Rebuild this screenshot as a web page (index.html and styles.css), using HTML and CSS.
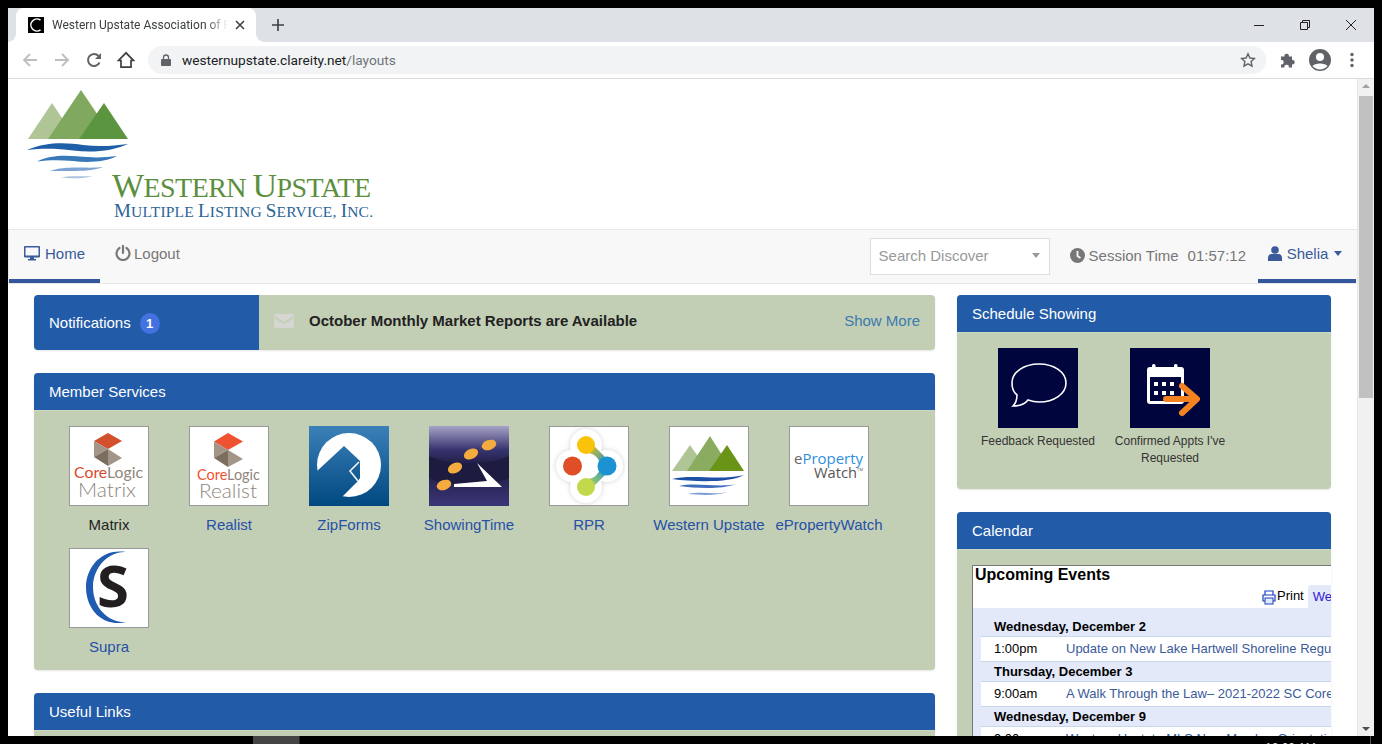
FILE: index.html
```html
<!DOCTYPE html>
<html lang="en">
<head>
<meta charset="utf-8">
<title>Western Upstate Association of REALTORS</title>
<link rel="stylesheet" href="styles.css">
</head>
<body>
<div class="window">
  <div class="tabstrip">
    <div class="tab">
      <span class="favicon"><svg width="16" height="16" viewBox="0 0 16 16"><rect width="16" height="16" fill="#000"/><path d="M12.500 3.200A6 6 0 1 0 12.500 12.800" fill="none" stroke="#fff" stroke-width="1.500"/></svg></span>
      <span class="tab-title">Western Upstate Association of REALTORS</span>
      <svg class="tab-x" width="10" height="10" viewBox="0 0 10 10"><path d="M1 1l8 8M9 1l-8 8" stroke="#3c4043" stroke-width="1.600"/></svg>
    </div>
    <svg class="newtab" width="12" height="12" viewBox="0 0 12 12"><path d="M6 0v12M0 6h12" stroke="#3c4043" stroke-width="1.600"/></svg>
    <div class="winctl">
      <svg width="12" height="12" viewBox="0 0 12 12"><path d="M1 6.500h10" stroke="#222" stroke-width="1"/></svg>
      <svg width="12" height="12" viewBox="0 0 12 12"><path d="M3.500 3V1.500H10.500V8.500H8.500M1.500 3.500H8.500V10.500H1.500Z" fill="none" stroke="#222" stroke-width="1"/></svg>
      <svg width="12" height="12" viewBox="0 0 12 12"><path d="M1 1l10 10M11 1L1 11" stroke="#222" stroke-width="1"/></svg>
    </div>
  </div>
  <div class="toolbar">
    <svg class="tb-back" width="16" height="16" viewBox="0 0 16 16"><path d="M15 8H2M8 2L2 8l6 6" fill="none" stroke="#bcbec2" stroke-width="1.800"/></svg>
    <svg class="tb-fwd" width="16" height="16" viewBox="0 0 16 16"><path d="M1 8h13M8 2l6 6-6 6" fill="none" stroke="#bcbec2" stroke-width="1.800"/></svg>
    <svg class="tb-reload" width="16" height="16" viewBox="0 0 16 16"><path d="M13.500 10.500A6 6 0 1 1 12.500 4" fill="none" stroke="#5f6368" stroke-width="2"/><path d="M15 1v6H9z" fill="#5f6368"/></svg>
    <svg class="tb-home" width="18" height="18" viewBox="0 0 18 18"><path d="M9 1.800L1.500 9.500H4v6.700h10V9.500h2.500z" fill="none" stroke="#3c4043" stroke-width="1.700" stroke-linejoin="miter"/></svg>
    <div class="omnibox">
      <svg width="10" height="12" viewBox="0 0 10 12"><path d="M1 5h8a1 1 0 0 1 1 1v5a1 1 0 0 1-1 1H1a1 1 0 0 1-1-1V6a1 1 0 0 1 1-1z" fill="#5f6368"/><path d="M2.500 5V3.500a2.500 2.500 0 0 1 5 0V5" fill="none" stroke="#5f6368" stroke-width="1.300"/></svg>
      <span class="url"><span class="url-host">westernupstate.clareity.net</span>/layouts</span>
      <svg class="star" width="16" height="16" viewBox="0 0 16 16"><path d="M8 1.800l1.900 4.200 4.500.5-3.300 3.100.9 4.500L8 11.800l-4 2.300.9-4.500L1.600 6.500l4.500-.5z" fill="none" stroke="#5f6368" stroke-width="1.400"/></svg>
    </div>
    <svg class="tb-ext" width="16" height="16" viewBox="0 0 16 16"><path d="M1 4.500h3.500a2.200 2.200 0 1 1 4.300 0H12V8a2.200 2.200 0 1 1 0 4.300V15.500H8.800a2.200 2.200 0 1 0-4.300 0H1v-3.200a2.200 2.200 0 1 0 0-4.300z" fill="#5f6368"/></svg>
    <svg class="tb-user" width="24" height="24" viewBox="0 0 24 24"><circle cx="12" cy="12" r="11" fill="#5f6368"/><circle cx="12" cy="9" r="4" fill="#fff"/><path d="M4.500 18c2-3.500 13-3.500 15 0a10 10 0 0 1-15 0z" fill="#fff"/></svg>
    <svg class="tb-menu" width="4" height="16" viewBox="0 0 4 16"><circle cx="2" cy="2.500" r="1.700" fill="#5f6368"/><circle cx="2" cy="8" r="1.700" fill="#5f6368"/><circle cx="2" cy="13.500" r="1.700" fill="#5f6368"/></svg>
  </div>
  <div class="viewport">
    <div class="page">
      <header class="brand">
        <svg class="brand-logo" width="380" height="150" viewBox="0 0 380 150">
          <polygon points="20,60 44,24 68,60" fill="#afc595"/>
          <polygon points="40,60 73,11 106,60" fill="#80a95f"/>
          <polygon points="71,60 96,24 120,60" fill="#5b953f"/>
          <path d="M19 71C40 62 60 64 75 66C90 68 105 67 120 65C105 72 85 74 65 71.500C50 69.500 35 69 19 71Z" fill="#1f5fa8"/>
          <path d="M29 82.500C45 74 65 77 80 78C90 79 100 78 109 77C98 83 80 84 65 82C52 81 40 81 29 82.500Z" fill="#3878b8"/>
          <path d="M42 92C58 86 80 90 95 88C82 93.500 62 91.500 42 92Z" fill="#7ca4d2"/>
          <path d="M53 98.500C62 96 76 98 85 97C76 100 62 99.500 53 98.500Z" fill="#a8c2e0"/>
          <text class="logo-title" x="104" y="118" textLength="259" lengthAdjust="spacing"><tspan class="logo-cap">W</tspan><tspan class="logo-sc">estern </tspan><tspan class="logo-cap">U</tspan><tspan class="logo-sc">pstate</tspan></text>
          <text class="logo-sub" x="106" y="138" textLength="259" lengthAdjust="spacing"><tspan class="logo-subcap">M</tspan><tspan class="logo-subsc">ultiple </tspan><tspan class="logo-subcap">L</tspan><tspan class="logo-subsc">isting </tspan><tspan class="logo-subcap">S</tspan><tspan class="logo-subsc">ervice, </tspan><tspan class="logo-subcap">I</tspan><tspan class="logo-subsc">nc.</tspan></text>
        </svg>
      </header>
      <nav class="navbar">
        <a class="nav-link is-active">
          <svg width="16" height="15" viewBox="0 0 16 15"><path d="M1 0h14a1 1 0 0 1 1 1v9.500a1 1 0 0 1-1 1H10v1.500h2V14.500H4V13h2v-1.500H1a1 1 0 0 1-1-1V1a1 1 0 0 1 1-1zm.5 1.500v8h13v-8z" fill="#3a5a9a"/></svg>
          <span>Home</span>
        </a>
        <a class="nav-link nav-logout">
          <svg width="16" height="16" viewBox="0 0 16 16"><path d="M8 1v7" stroke="#777" stroke-width="2.200" stroke-linecap="round"/><path d="M11.500 3a6.500 6.500 0 1 1-7 0" fill="none" stroke="#777" stroke-width="2.200" stroke-linecap="round"/></svg>
          <span>Logout</span>
        </a>
        <div class="nav-right">
          <div class="search"><span>Search Discover</span><i class="caret"></i></div>
          <div class="session">
            <svg width="15" height="15" viewBox="0 0 15 15"><circle cx="7.500" cy="7.500" r="7.500" fill="#777"/><path d="M7.500 3v5l3 2" fill="none" stroke="#f8f8f8" stroke-width="1.800"/></svg>
            <span>Session Time</span><span class="session-time">01:57:12</span>
          </div>
          <a class="nav-link nav-user is-active">
            <svg width="14" height="15" viewBox="0 0 14 15"><circle cx="7" cy="4" r="3.800" fill="#3a5a9a"/><path d="M0 15v-3.500C0 9 2 8 4 8h6c2 0 4 1 4 3.500V15z" fill="#3a5a9a"/></svg>
            <span>Shelia</span><i class="caret caret-blue"></i>
          </a>
        </div>
      </nav>
      <main class="content">
        <div class="col-left">
          <section class="notify">
            <div class="notify-head"><span>Notifications</span><b class="badge">1</b></div>
            <div class="notify-body">
              <svg width="20" height="14" viewBox="0 0 20 14"><path d="M1 0h18a1 1 0 0 1 1 1v1L10 8 0 2V1a1 1 0 0 1 1-1zM0 4l10 6 10-6v9a1 1 0 0 1-1 1H1a1 1 0 0 1-1-1z" fill="#d5d6d2"/></svg>
              <strong>October Monthly Market Reports are Available</strong>
              <a class="show-more">Show More</a>
            </div>
          </section>
          <section class="panel">
            <h2 class="panel-head">Member Services</h2>
            <div class="tiles">
              <a class="tile">
                <svg class="tile-img framed" viewBox="0 0 78 78">
                  <polygon points="38,6 52,14 38,22 24,14" fill="#d2502c"/><polygon points="24,14 38,22 24,30" fill="#a39587"/><polygon points="24,30 38,22 38,39" fill="#7c6e5f"/><polygon points="38,22 52,31 38,39" fill="#a39587"/>
                  <text class="svg-core" x="4" y="51" textLength="69" lengthAdjust="spacingAndGlyphs"><tspan fill="#d9492c">Core</tspan><tspan fill="#8f867d">Logic</tspan></text>
                  <text class="svg-prod" x="8" y="70" textLength="58" lengthAdjust="spacingAndGlyphs">Matrix</text>
                </svg>
                <span class="tile-label is-dark">Matrix</span>
              </a>
              <a class="tile">
                <svg class="tile-img framed" viewBox="0 0 78 78">
                  <polygon points="38,6 53,14.500 38,23 24,14.500" fill="#ee5230"/><polygon points="24,14.500 38,23 24,31" fill="#a39587"/><polygon points="24,31 38,23 38,40" fill="#7c6e5f"/><polygon points="38,23 53,32 38,40" fill="#a39587"/>
                  <text class="svg-core" x="7" y="53" textLength="63" lengthAdjust="spacingAndGlyphs"><tspan fill="#ee5230">Core</tspan><tspan fill="#8f867d">Logic</tspan></text>
                  <text class="svg-prod" x="9" y="71" textLength="58" lengthAdjust="spacingAndGlyphs">Realist</text>
                </svg>
                <span class="tile-label">Realist</span>
              </a>
              <a class="tile">
                <svg class="tile-img" viewBox="0 0 80 80">
                  <defs><linearGradient id="zf" gradientUnits="userSpaceOnUse" x1="0" y1="0" x2="0" y2="80"><stop offset="0" stop-color="#3c80b8"/><stop offset="1" stop-color="#004880"/></linearGradient></defs>
                  <rect width="80" height="80" fill="url(#zf)"/>
                  <circle cx="40" cy="39" r="32" fill="#fff"/>
                  <polygon points="7,46 35,20 51,35 51,52 49,55 33,71 20,80 0,80 0,46" fill="url(#zf)"/>
                  <path d="M50 36L41 45L49 55" fill="none" stroke="#fff" stroke-width="1.500"/>
                </svg>
                <span class="tile-label">ZipForms</span>
              </a>
              <a class="tile">
                <svg class="tile-img" viewBox="0 0 80 80">
                  <defs><linearGradient id="st" x1="0" y1="0" x2="0" y2="1"><stop offset="0" stop-color="#a5a3c6"/><stop offset=".3" stop-color="#37336f"/><stop offset=".5" stop-color="#1d1b40"/><stop offset="1" stop-color="#3b3578"/></linearGradient></defs>
                  <rect width="80" height="80" fill="url(#st)"/>
                  <path d="M0 30C20 40 60 40 80 30V52C60 62 20 62 0 52z" fill="#1d1b3f"/>
                  <ellipse cx="15" cy="59" rx="7.500" ry="5" fill="#f5ab3d" transform="rotate(-20 15 59)"/>
                  <ellipse cx="26" cy="42" rx="7.500" ry="5" fill="#f5ab3d" transform="rotate(-25 26 42)"/>
                  <ellipse cx="42" cy="28" rx="7.500" ry="5" fill="#f5ab3d" transform="rotate(-25 42 28)"/>
                  <ellipse cx="60" cy="19" rx="7.500" ry="5" fill="#f5ab3d" transform="rotate(-20 60 19)"/>
                  <polygon points="48,37 73,61 25,61 25,58 58,55" fill="#fff"/>
                </svg>
                <span class="tile-label">ShowingTime</span>
              </a>
              <a class="tile">
                <svg class="tile-img framed" viewBox="0 0 78 78">
                  <defs>
                    <filter id="blob" x="-20%" y="-20%" width="140%" height="140%"><feDropShadow dx="0" dy="0" stdDeviation="2.500" flood-color="#999" flood-opacity=".45"/></filter>
                    <linearGradient id="rp1" gradientUnits="userSpaceOnUse" x1="36" y1="18" x2="57" y2="39"><stop offset="0" stop-color="#f9c30a"/><stop offset="1" stop-color="#1c92d2"/></linearGradient>
                    <linearGradient id="rp2" gradientUnits="userSpaceOnUse" x1="36" y1="60" x2="57" y2="39"><stop offset="0" stop-color="#c2d94c"/><stop offset="1" stop-color="#1c92d2"/></linearGradient>
                  </defs>
                  <g fill="#fff" filter="url(#blob)"><circle cx="36" cy="18" r="16"/><circle cx="22" cy="39" r="16"/><circle cx="57" cy="39" r="16"/><circle cx="36" cy="60" r="16"/><rect x="24" y="24" width="28" height="30"/></g>
                  <path d="M36 18L57 39" stroke="url(#rp1)" stroke-width="10"/>
                  <path d="M36 60L57 39" stroke="url(#rp2)" stroke-width="10"/>
                  <circle cx="37" cy="39" r="13" fill="#fff"/>
                  <circle cx="36" cy="18" r="9" fill="#f9c30a"/><circle cx="22.500" cy="39" r="9.500" fill="#e04e28"/><circle cx="57" cy="39" r="9.500" fill="#1c92d2"/><circle cx="36" cy="60" r="9" fill="#c2d94c"/>
                </svg>
                <span class="tile-label">RPR</span>
              </a>
              <a class="tile">
                <svg class="tile-img framed" viewBox="0 0 78 78">
                  <polygon points="2,44 20,18 38,44" fill="#afc595"/><polygon points="17,44 40,9 62,44" fill="#8aac5f"/><polygon points="39,44 57,18 74,44" fill="#6a9418"/>
                  <path d="M2 52C22 47 50 54 74 48C60 56 25 55 2 52Z" fill="#1d4fa6"/>
                  <path d="M9 59C25 55 50 61 66 57C50 63 25 61 9 59Z" fill="#3f6cbc"/>
                  <path d="M18 67C32 64 46 68 57 65C46 69 30 68 18 67Z" fill="#7d9dd8"/>
                </svg>
                <span class="tile-label">Western Upstate</span>
              </a>
              <a class="tile">
                <svg class="tile-img framed" viewBox="0 0 78 78">
                  <text class="svg-eprop" x="4" y="37" textLength="69" lengthAdjust="spacingAndGlyphs"><tspan fill="#666">e</tspan><tspan fill="#2f8fdc">Property</tspan></text>
                  <text class="svg-watch" x="24" y="51" textLength="43" lengthAdjust="spacingAndGlyphs">Watch</text>
                  <text class="svg-tm" x="67" y="44" textLength="6">TM</text>
                </svg>
                <span class="tile-label">ePropertyWatch</span>
              </a>
              <a class="tile">
                <svg class="tile-img framed" viewBox="0 0 78 78">
                  <path d="M56 3C30 -1 16 20 16 38C16 60 32 79 58 73C40 75 23 60 23 38C23 19 38 2 56 3Z" fill="#1f5bb0"/>
                  <text class="svg-s" x="27" y="58">S</text>
                </svg>
                <span class="tile-label">Supra</span>
              </a>
            </div>
          </section>
          <section class="panel">
            <h2 class="panel-head">Useful Links</h2>
            <div class="panel-stub"></div>
          </section>
        </div>
        <div class="col-right">
          <section class="panel">
            <h2 class="panel-head">Schedule Showing</h2>
            <div class="shows">
              <a class="show">
                <svg class="show-img" viewBox="0 0 80 80"><rect width="80" height="80" fill="#00053e"/><path d="M41 16C56 16 68 24 68 35C68 46 56 54 41 54C36 54 33 53 30 52C27 56 21 58 15 58C18 55 19 52 19 47C15 44 14 40 14 35C14 24 26 16 41 16Z" fill="none" stroke="#fff" stroke-width="1.600"/></svg>
                <span class="show-label">Feedback Requested</span>
              </a>
              <a class="show">
                <svg class="show-img" viewBox="0 0 80 80"><rect width="80" height="80" fill="#00053e"/><rect x="17" y="19" width="37" height="37" rx="3" fill="#fff"/><rect x="22" y="16" width="3.500" height="6" rx="1.500" fill="#fff"/><rect x="44" y="16" width="3.500" height="6" rx="1.500" fill="#fff"/><rect x="20" y="29" width="31" height="24" fill="#00053e"/><g fill="#fff"><rect x="24" y="34" width="4" height="4"/><rect x="32" y="34" width="4" height="4"/><rect x="40" y="34" width="4" height="4"/><rect x="24" y="43" width="4" height="4"/><rect x="32" y="43" width="4" height="4"/><rect x="40" y="43" width="4" height="4"/></g><path d="M36 51H66M52 38L67 51L52 65" fill="none" stroke="#f58220" stroke-width="6" stroke-linecap="round" stroke-linejoin="round"/></svg>
                <span class="show-label">Confirmed Appts I've Requested</span>
              </a>
            </div>
          </section>
          <section class="panel">
            <h2 class="panel-head">Calendar</h2>
            <div class="cal-wrap">
              <div class="cal">
                <div class="cal-title">Upcoming Events</div>
                <div class="cal-tabs">
                  <svg width="14" height="15" viewBox="0 0 14 15"><path d="M3 5V1h8v4M3 11H1V5h12v6h-2" fill="none" stroke="#1a3fc0" stroke-width="1.200"/><rect x="3" y="8" width="8" height="6" fill="#e3e9f8" stroke="#1a3fc0" stroke-width="1"/></svg>
                  <span class="cal-print">Print</span>
                  <span class="cal-tab">Week</span>
                </div>
                <div class="cal-list">
                  <div class="cal-date">Wednesday, December 2</div>
                  <div class="cal-row"><span class="cal-time">1:00pm</span><a class="cal-event">Update on New Lake Hartwell Shoreline Regulations</a></div>
                  <div class="cal-date">Thursday, December 3</div>
                  <div class="cal-row"><span class="cal-time">9:00am</span><a class="cal-event">A Walk Through the Law– 2021-2022 SC Core Course</a></div>
                  <div class="cal-date">Wednesday, December 9</div>
                  <div class="cal-row"><span class="cal-time">9:00am</span><a class="cal-event">Western Upstate MLS New Member Orientation</a></div>
                </div>
              </div>
            </div>
          </section>
        </div>
      </main>
    </div>
    <div class="scrollbar">
      <i class="sb-up"></i>
      <div class="sb-track"><div class="sb-thumb"></div></div>
      <i class="sb-down"></i>
    </div>
  </div>
</div>
<div class="taskbar"><span class="task-item"></span><span class="task-clock">12:00 AM</span><span class="task-edge"></span></div>
</body>
</html>
```
FILE: styles.css
```css
* { box-sizing: border-box; }
html, body { height: 744px; overflow: hidden; }
body { margin: 0; background: #000; font-family: "Liberation Sans", Arial, sans-serif; font-size: 15px; color: #333; }
a { text-decoration: none; }
svg { display: block; flex: none; }

.window { margin: 8px 8px 0; height: 728px; background: #fff; display: flex; flex-direction: column; overflow: hidden; }

.tabstrip { height: 34px; flex: none; background: #dee1e6; display: flex; align-items: center; }
.tab { position: relative; width: 240px; height: 34px; margin-left: 8px; background: #fff; border-radius: 8px 8px 0 0; display: flex; align-items: center; padding: 0 11px 0 12px; }
.tab::before, .tab::after { content: ""; position: absolute; bottom: 0; width: 8px; height: 8px; }
.tab::before { left: -8px; background: radial-gradient(circle at 0 0, #dee1e6 7.500px, #fff 8px); }
.tab::after { right: -8px; background: radial-gradient(circle at 100% 0, #dee1e6 7.500px, #fff 8px); }
.favicon { flex: none; }
.tab-title { width: 176px; margin-left: 8px; white-space: nowrap; overflow: hidden; font: 12px Roboto, sans-serif; color: #3c4043; -webkit-mask-image: linear-gradient(90deg, #000 88%, transparent); mask-image: linear-gradient(90deg, #000 88%, transparent); }
.tab-x { margin-left: auto; }
.newtab { margin-left: 16px; }
.winctl { margin-left: auto; display: flex; gap: 34px; padding-right: 17px; }

.toolbar { height: 37px; flex: none; background: #fff; border-bottom: 1px solid #dadce0; display: flex; align-items: center; padding-bottom: 1px; }
.tb-back { margin-left: 14px; }
.tb-fwd { margin-left: 16px; }
.tb-reload { margin-left: 16px; }
.tb-home { margin-left: 15px; }
.omnibox { width: 1118px; height: 28px; margin-left: 13px; background: #f1f3f4; border-radius: 14px; display: flex; align-items: center; padding: 0 10px 0 13px; }
.url { margin-left: 11px; font: 13.700px Roboto, sans-serif; color: #70757a; }
.url-host { color: #202124; }
.star { margin-left: auto; }
.tb-ext { margin-left: 14px; }
.tb-user { margin-left: 12px; }
.tb-menu { margin-left: 18px; }

.viewport { flex: 1; min-height: 0; display: flex; }
.page { flex: 1; min-width: 0; overflow: hidden; }

.brand { height: 150px; background: #fff; }
.logo-title { fill: #5b8f3e; font-family: "Liberation Serif", serif; }
.logo-cap { font-size: 34px; }
.logo-sc { font-size: 28px; text-transform: uppercase; }
.logo-sub { fill: #2a6496; font-family: "Liberation Serif", serif; }
.logo-subcap { font-size: 19px; }
.logo-subsc { font-size: 15.500px; text-transform: uppercase; }

.navbar { height: 55px; background: #f8f8f8; border: 1px solid #e7e7e7; border-width: 1px 0 1px 1px; display: flex; align-items: stretch; }
.nav-link { display: flex; align-items: center; gap: 5px; padding: 0 15px 7px; color: #777; }
.nav-link.is-active { color: #3a5a9a; border-bottom: 4px solid #34569c; padding-bottom: 3px; }
.navbar > .is-active { width: 91px; }
.nav-logout { gap: 3px; }
.nav-right { margin-left: auto; display: flex; align-items: stretch; }
.search { width: 180px; height: 37px; margin: 8px 20px 0 0; background: #fff; border: 1px solid #ddd; display: flex; align-items: center; padding: 0 9px 2px 8px; color: #999; justify-content: space-between; }
.caret { width: 0; height: 0; border: 4px solid transparent; border-top: 5px solid #999; border-bottom: 0; }
.caret-blue { border-top-color: #3a5a9a; margin-left: 1px; }
.session { display: flex; align-items: center; gap: 4px; color: #777; padding: 0 12px 3px 0; }
.session-time { margin-left: 5px; }
.nav-user { width: 98px; padding: 0 14px 3px 10px; margin-right: 1px; justify-content: center; }

.content { display: grid; grid-template-columns: 901px 374px; gap: 22px; padding: 11px 26px 0; align-items: start; }
.col-left, .col-right { display: flex; flex-direction: column; gap: 23px; }

.notify { height: 55px; display: flex; border-radius: 4px; overflow: hidden; box-shadow: 0 1px 2px rgba(0,0,0,.1); }
.notify-head { width: 225px; background: #225ba8; color: #fff; display: flex; align-items: center; gap: 9px; padding: 0 15px; }
.badge { width: 20px; height: 21px; margin-top: 2px; border-radius: 50%; background: #4272e0; display: flex; align-items: center; justify-content: center; font-size: 13px; }
.notify-body { flex: 1; background: #c3cfb5; display: flex; align-items: center; padding: 0 15px 4px; }
.notify-body strong { margin-left: 15px; color: #222; }
.show-more { margin-left: auto; color: #3a7ab0; }

.panel { border-radius: 4px; overflow: hidden; background: #c3cfb5; box-shadow: 0 1px 2px rgba(0,0,0,.1); }
.panel-head { margin: 0; height: 38px; background: #225ba8; border-bottom: 1px solid #cdd6c4; color: #fff; font-size: 15px; font-weight: 400; display: flex; align-items: center; padding: 0 15px; }
.panel-stub { height: 60px; }

.tiles { display: flex; flex-wrap: wrap; padding: 15px 15px 0; }
.tile { width: 120px; height: 122px; display: flex; flex-direction: column; align-items: center; white-space: nowrap; }
.tile-img { width: 80px; height: 80px; background: #fff; }
.tile-img.framed { border: 1px solid #999; }
.tile-label { margin-top: 10px; color: #2650a8; }
.tile-label.is-dark { color: #222; }

.svg-core { font: 15px Lato, sans-serif; }
.svg-prod { font: 300 20px Lato, sans-serif; fill: #8f867d; }
.svg-eprop { font: 15px "Open Sans", sans-serif; }
.svg-watch { font: 15px "Open Sans", sans-serif; fill: #555; }
.svg-tm { font: 4px "Open Sans", sans-serif; fill: #555; }
.svg-s { font: 700 58px "Open Sans", sans-serif; fill: #231f20; }

.shows { display: flex; height: 156px; padding: 15px 15px 0; }
.show { width: 132px; display: flex; flex-direction: column; align-items: center; padding: 0 10px; }
.show-img { width: 80px; height: 80px; }
.show-label { margin-top: 5px; font-size: 12px; line-height: 17px; text-align: center; color: #333; white-space: normal; }
.show:first-child .show-label { white-space: nowrap; }

.cal-wrap { padding: 15px 0 0 15px; height: 260px; }
.cal { height: 300px; background: #fff; border: 1px solid #777; border-right: 0; overflow: hidden; color: #000; }
.cal-title { height: 18px; padding: 0 2px; font-size: 16px; font-weight: 700; line-height: 18px; white-space: nowrap; }
.cal-tabs { height: 24px; display: flex; align-items: flex-start; padding: 4px 0 0 289px; white-space: nowrap; font-size: 13px; }
.cal-tabs svg { margin-top: 2px; }
.cal-print { margin-left: 1px; line-height: 16px; }
.cal-tab { margin: -3px 0 0 4px; padding: 4px 5px; height: 24px; background: #e3e9f8; color: #3018d0; border-radius: 3px 3px 0 0; }
.cal-list { background: #e3e9f8; padding: 9px 0 0 8px; }
.cal-date { height: 20px; padding-left: 13px; font-size: 13px; font-weight: 700; line-height: 20px; border-bottom: 1px solid #c8d8ec; white-space: nowrap; }
.cal-row { height: 25px; background: #fff; display: flex; align-items: center; font-size: 13px; border-bottom: 1px solid #c8d8ec; white-space: nowrap; padding: 0 0 2px 13px; }
.cal-time { width: 72px; flex: none; }
.cal-event { color: #3a5a9a; }

.scrollbar { width: 17px; flex: none; background: #f1f1f1; border-left: 1px solid #e8e8e8; display: flex; flex-direction: column; align-items: center; }
.sb-up, .sb-down { flex: none; width: 0; height: 0; border: 4px solid transparent; }
.sb-up { margin-top: 5px; border-bottom: 4px solid #a3a3a3; border-top: 0; }
.sb-down { margin-bottom: 5px; border-top: 4px solid #505050; border-bottom: 0; }
.sb-track { flex: 1; width: 100%; padding: 4px 1px 0 1px; }
.sb-thumb { height: 302px; margin: 4px 0 0; background: #c1c1c1; }

.taskbar { height: 8px; display: flex; overflow: hidden; background: #000; }
.task-item { width: 47px; height: 8px; margin-left: 253px; background: #444; border-right: 1px solid #222; }
.task-clock { margin: 5px 0 0 965px; font-size: 12px; line-height: 14px; color: #ddd; white-space: nowrap; }
.task-edge { width: 1px; height: 8px; margin-left: 54px; background: #555; }
```
